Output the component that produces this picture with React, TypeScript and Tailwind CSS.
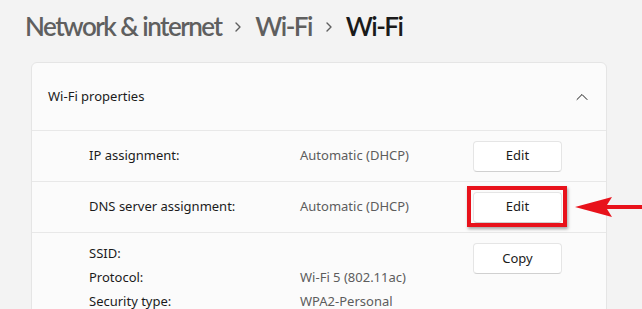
import { ChevronUp } from 'lucide-react'

const font = { fontFamily: '"Noto Sans", "Open Sans", sans-serif' }

function Crumb() {
  return (
    <svg width="8" height="12" viewBox="0 0 8 12" className="mx-[13px] mt-[12px] text-[#5f5f5f]">
      <path d="M2 2 L6 6 L2 10" fill="none" stroke="currentColor" strokeWidth="1.4" strokeLinecap="round" strokeLinejoin="round" />
    </svg>
  )
}

function Btn({ label }: { label: string }) {
  return (
    <button className="w-[89px] h-[31px] rounded-[4px] bg-white border border-[#e5e5e5] border-b-[#d0d0d0] text-[13px] text-[#1b1b1b]">
      {label}
    </button>
  )
}

export default function App() {
  return (
    <div className="w-[642px] h-[309px] overflow-hidden bg-[#f3f3f3] relative" style={font}>
      {/* Breadcrumb */}
      <div
        className="h-[62px] pl-[25px] pt-[9px] flex items-start text-[26px] font-semibold tracking-[-1.55px] leading-[34px]"
        style={{ fontFamily: 'Lato, "Noto Sans", sans-serif' }}
      >
        <span className="text-[#5f5f5f]">Network &amp; internet</span>
        <Crumb />
        <span className="text-[#5f5f5f]">Wi-Fi</span>
        <Crumb />
        <span className="text-[#1a1a1a]">Wi-Fi</span>
      </div>

      {/* Card */}
      <div className="ml-[31px] w-[576px] rounded-t-[6px] border border-[#e5e5e5] bg-[#fbfbfb] text-[13px] text-[#1b1b1b]">
        <div className="h-[67px] pl-[16px] pr-[14px] flex items-center justify-between">
          <span>Wi-Fi properties</span>
          <ChevronUp size={20} strokeWidth={1.2} className="text-[#1b1b1b]" />
        </div>

        <div className="h-[51px] border-t border-[#e8e8e8] flex items-center">
          <span className="w-[268px] pl-[57px]">IP assignment:</span>
          <span className="w-[173px] text-[#5d5d5d]">Automatic (DHCP)</span>
          <Btn label="Edit" />
        </div>

        <div className="h-[51px] border-t border-[#e8e8e8] flex items-center">
          <span className="w-[268px] pl-[57px]">DNS server assignment:</span>
          <span className="w-[173px] text-[#5d5d5d]">Automatic (DHCP)</span>
          <div className="relative">
            <Btn label="Edit" />
            <div className="absolute -left-[6px] -right-[5px] -top-[6px] -bottom-[4px] border-[4px] border-[#e8121b] shadow-[1px_2px_3px_rgba(0,0,0,0.35)]" />
          </div>
        </div>

        <div className="border-t border-[#e8e8e8] pt-[10px] flex">
          <div className="w-[268px] pl-[57px] flex flex-col gap-[4px] leading-[20px]">
            <span>SSID:</span>
            <span>Protocol:</span>
            <span>Security type:</span>
          </div>
          <div className="w-[173px] flex flex-col gap-[4px] leading-[20px] text-[#5d5d5d]">
            <span>&nbsp;</span>
            <span>Wi-Fi 5 (802.11ac)</span>
            <span>WPA2-Personal</span>
          </div>
          <div>
            <Btn label="Copy" />
          </div>
        </div>
      </div>

      {/* Arrow pointing to highlighted button */}
      <svg className="absolute left-[572px] top-[195px]" width="70" height="24" viewBox="0 0 70 24">
        <path d="M3 12 L40 2 L35 10 L70 10 L70 14 L35 14 L40 22 Z" fill="#e8121b" />
      </svg>
    </div>
  )
}
